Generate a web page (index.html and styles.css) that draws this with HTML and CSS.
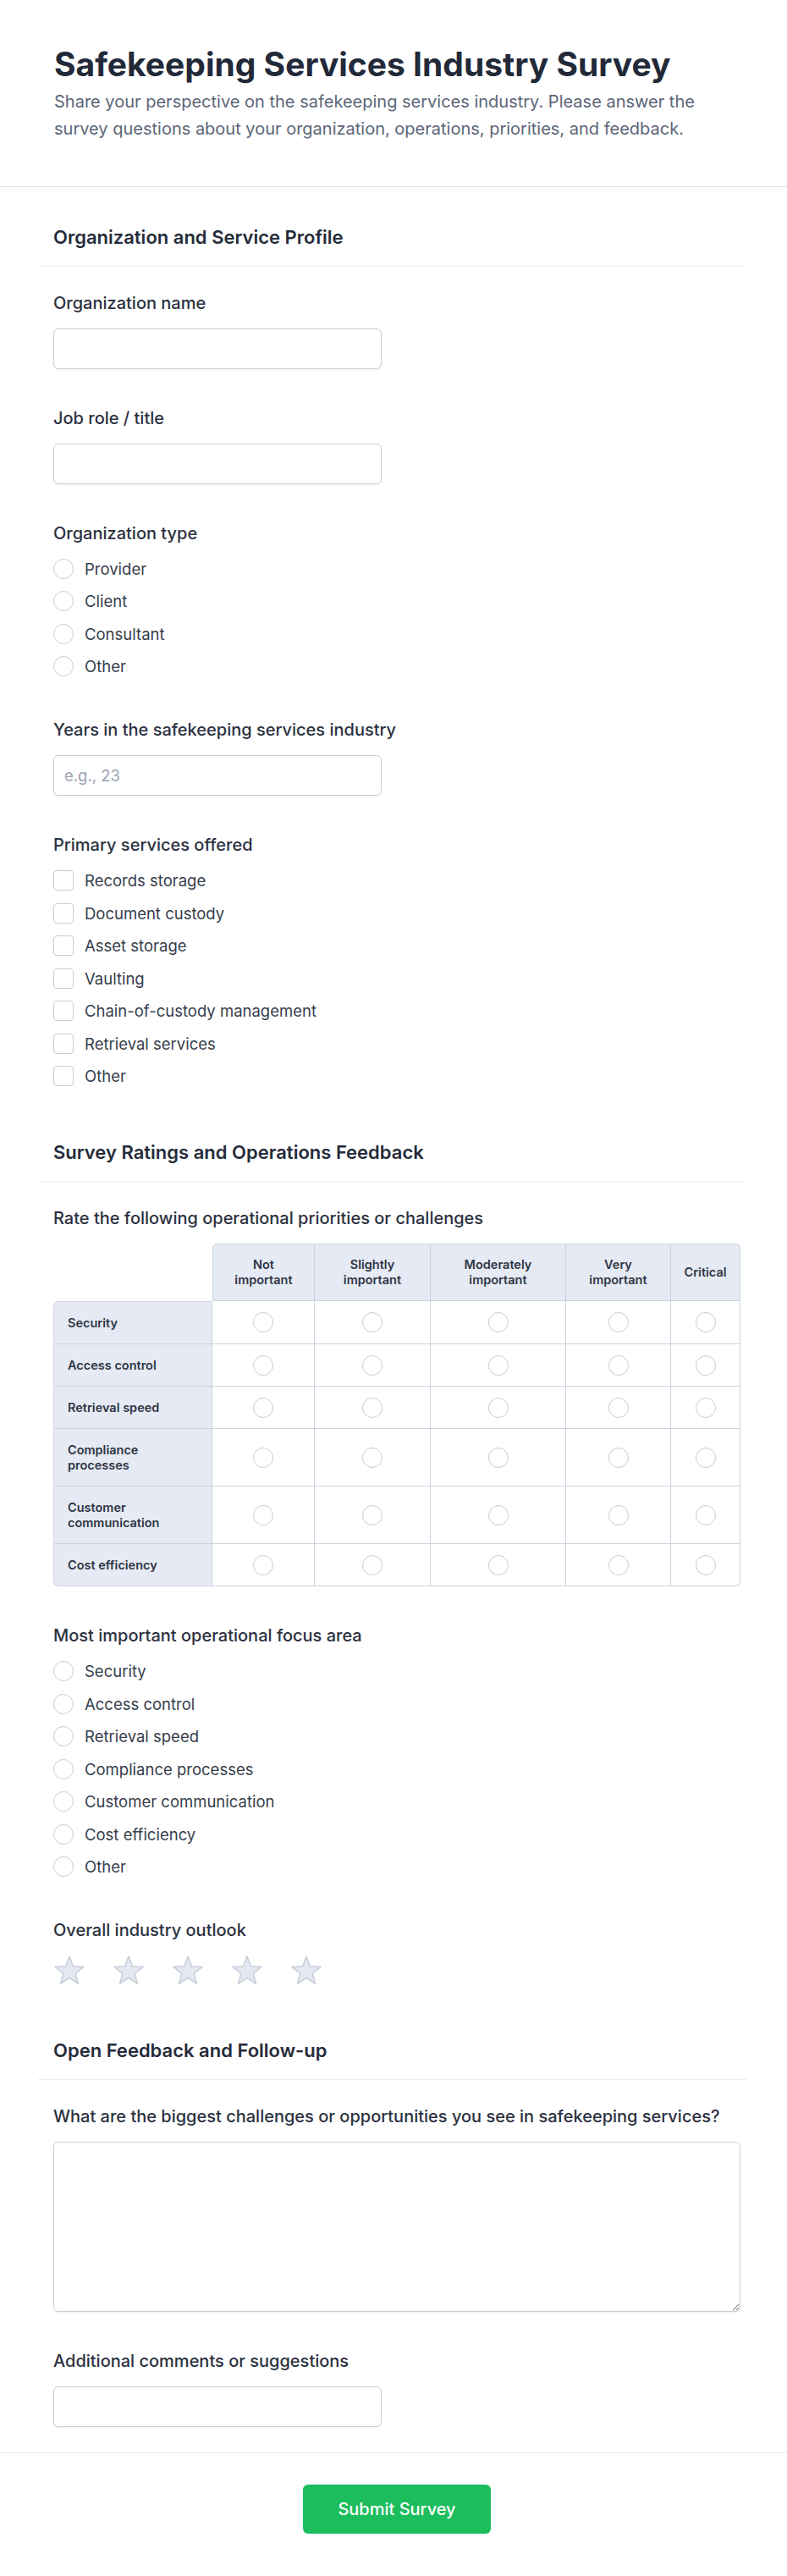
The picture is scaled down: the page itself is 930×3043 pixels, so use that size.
FILE: index.html
```html
<!DOCTYPE html>
<html lang="en">
<head>
<meta charset="utf-8">
<title>Safekeeping Services Industry Survey</title>
<link rel="stylesheet" href="styles.css">
</head>
<body>
<header class="survey-header">
  <h1 class="title">Safekeeping Services Industry Survey</h1>
  <p class="subtitle">Share your perspective on the safekeeping services industry. Please answer the survey questions about your organization, operations, priorities, and feedback.</p>
</header>

<form class="survey-form">
  <section class="section">
    <h2 class="section-title">Organization and Service Profile</h2>
    <div class="section-body">
      <div class="field">
        <label class="field-label">Organization name</label>
        <input class="text-input" type="text">
      </div>
      <div class="field">
        <label class="field-label">Job role / title</label>
        <input class="text-input" type="text">
      </div>
      <div class="field field-choices">
        <span class="field-label">Organization type</span>
        <div class="options">
          <label class="option"><input class="radio" type="radio" name="orgtype"><span>Provider</span></label>
          <label class="option"><input class="radio" type="radio" name="orgtype"><span>Client</span></label>
          <label class="option"><input class="radio" type="radio" name="orgtype"><span>Consultant</span></label>
          <label class="option"><input class="radio" type="radio" name="orgtype"><span>Other</span></label>
        </div>
      </div>
      <div class="field">
        <label class="field-label">Years in the safekeeping services industry</label>
        <input class="text-input" type="text" placeholder="e.g., 23">
      </div>
      <div class="field field-last">
        <span class="field-label">Primary services offered</span>
        <div class="options">
          <label class="option"><input class="checkbox" type="checkbox"><span>Records storage</span></label>
          <label class="option"><input class="checkbox" type="checkbox"><span>Document custody</span></label>
          <label class="option"><input class="checkbox" type="checkbox"><span>Asset storage</span></label>
          <label class="option"><input class="checkbox" type="checkbox"><span>Vaulting</span></label>
          <label class="option"><input class="checkbox" type="checkbox"><span>Chain-of-custody management</span></label>
          <label class="option"><input class="checkbox" type="checkbox"><span>Retrieval services</span></label>
          <label class="option"><input class="checkbox" type="checkbox"><span>Other</span></label>
        </div>
      </div>
    </div>
  </section>

  <section class="section">
    <h2 class="section-title">Survey Ratings and Operations Feedback</h2>
    <div class="section-body">
      <div class="field">
        <span class="field-label">Rate the following operational priorities or challenges</span>
        <table class="matrix">
          <colgroup>
            <col class="col-label"><col class="col-not"><col class="col-slight"><col class="col-mod"><col class="col-very"><col class="col-crit">
          </colgroup>
          <thead>
            <tr>
              <th class="corner"></th>
              <th class="head head-first">Not important</th>
              <th class="head">Slightly important</th>
              <th class="head">Moderately important</th>
              <th class="head">Very important</th>
              <th class="head head-last">Critical</th>
            </tr>
          </thead>
          <tbody>
            <tr>
              <th class="row-label row-first">Security</th>
              <td><input class="radio" type="radio" name="m1"></td><td><input class="radio" type="radio" name="m1"></td><td><input class="radio" type="radio" name="m1"></td><td><input class="radio" type="radio" name="m1"></td><td><input class="radio" type="radio" name="m1"></td>
            </tr>
            <tr>
              <th class="row-label">Access control</th>
              <td><input class="radio" type="radio" name="m2"></td><td><input class="radio" type="radio" name="m2"></td><td><input class="radio" type="radio" name="m2"></td><td><input class="radio" type="radio" name="m2"></td><td><input class="radio" type="radio" name="m2"></td>
            </tr>
            <tr>
              <th class="row-label">Retrieval speed</th>
              <td><input class="radio" type="radio" name="m3"></td><td><input class="radio" type="radio" name="m3"></td><td><input class="radio" type="radio" name="m3"></td><td><input class="radio" type="radio" name="m3"></td><td><input class="radio" type="radio" name="m3"></td>
            </tr>
            <tr>
              <th class="row-label">Compliance processes</th>
              <td><input class="radio" type="radio" name="m4"></td><td><input class="radio" type="radio" name="m4"></td><td><input class="radio" type="radio" name="m4"></td><td><input class="radio" type="radio" name="m4"></td><td><input class="radio" type="radio" name="m4"></td>
            </tr>
            <tr>
              <th class="row-label">Customer communication</th>
              <td><input class="radio" type="radio" name="m5"></td><td><input class="radio" type="radio" name="m5"></td><td><input class="radio" type="radio" name="m5"></td><td><input class="radio" type="radio" name="m5"></td><td><input class="radio" type="radio" name="m5"></td>
            </tr>
            <tr class="row-last">
              <th class="row-label">Cost efficiency</th>
              <td><input class="radio" type="radio" name="m6"></td><td><input class="radio" type="radio" name="m6"></td><td><input class="radio" type="radio" name="m6"></td><td><input class="radio" type="radio" name="m6"></td><td><input class="radio" type="radio" name="m6"></td>
            </tr>
          </tbody>
        </table>
      </div>
      <div class="field field-choices">
        <span class="field-label">Most important operational focus area</span>
        <div class="options">
          <label class="option"><input class="radio" type="radio" name="focus"><span>Security</span></label>
          <label class="option"><input class="radio" type="radio" name="focus"><span>Access control</span></label>
          <label class="option"><input class="radio" type="radio" name="focus"><span>Retrieval speed</span></label>
          <label class="option"><input class="radio" type="radio" name="focus"><span>Compliance processes</span></label>
          <label class="option"><input class="radio" type="radio" name="focus"><span>Customer communication</span></label>
          <label class="option"><input class="radio" type="radio" name="focus"><span>Cost efficiency</span></label>
          <label class="option"><input class="radio" type="radio" name="focus"><span>Other</span></label>
        </div>
      </div>
      <div class="field field-last">
        <span class="field-label">Overall industry outlook</span>
        <div class="stars">
          <svg class="star" viewBox="0 0 40 36" width="40" height="34"><polygon points="20,1 24.7,13.53 38.07,14.13 27.61,22.47 31.17,35.37 20,28 8.83,35.37 12.39,22.47 1.93,14.13 15.3,13.53"/></svg>
          <svg class="star" viewBox="0 0 40 36" width="40" height="34"><polygon points="20,1 24.7,13.53 38.07,14.13 27.61,22.47 31.17,35.37 20,28 8.83,35.37 12.39,22.47 1.93,14.13 15.3,13.53"/></svg>
          <svg class="star" viewBox="0 0 40 36" width="40" height="34"><polygon points="20,1 24.7,13.53 38.07,14.13 27.61,22.47 31.17,35.37 20,28 8.83,35.37 12.39,22.47 1.93,14.13 15.3,13.53"/></svg>
          <svg class="star" viewBox="0 0 40 36" width="40" height="34"><polygon points="20,1 24.7,13.53 38.07,14.13 27.61,22.47 31.17,35.37 20,28 8.83,35.37 12.39,22.47 1.93,14.13 15.3,13.53"/></svg>
          <svg class="star" viewBox="0 0 40 36" width="40" height="34"><polygon points="20,1 24.7,13.53 38.07,14.13 27.61,22.47 31.17,35.37 20,28 8.83,35.37 12.39,22.47 1.93,14.13 15.3,13.53"/></svg>
        </div>
      </div>
    </div>
  </section>

  <section class="section">
    <h2 class="section-title">Open Feedback and Follow-up</h2>
    <div class="section-body">
      <div class="field">
        <label class="field-label">What are the biggest challenges or opportunities you see in safekeeping services?</label>
        <textarea class="text-area"></textarea>
      </div>
      <div class="field field-last">
        <label class="field-label">Additional comments or suggestions</label>
        <input class="text-input" type="text">
      </div>
    </div>
  </section>
</form>

<footer class="form-footer">
  <button class="submit-btn" type="button">Submit Survey</button>
</footer>
</body>
</html>
```

FILE: styles.css
```css
* { box-sizing: border-box; }

html, body {
  margin: 0;
  padding: 0;
  background: #ffffff;
}

body {
  font-family: Inter, "Noto Sans", "Liberation Sans", sans-serif;
  color: #2b3140;
  font-size: 18.5px;
}

.survey-header {
  padding: 53px 64px 52px;
  border-bottom: 1px solid #dde2ea;
}

.title {
  margin: 0 0 4px;
  font-size: 39px;
  line-height: 46.8px;
  font-weight: 700;
  color: #222939;
}

.subtitle {
  margin: 0;
  font-size: 20px;
  line-height: 32px;
  color: #5b6577;
}

.survey-form {
  padding: 45px 47px 30px 45px;
}

.section + .section {
  margin-top: 64px;
}

.section-title {
  margin: 0;
  padding: 0 18px 20px;
  font-size: 22px;
  line-height: 28px;
  font-weight: 600;
  color: #252b3a;
  border-bottom: 1px solid #eceef2;
}

.section-body {
  padding: 31px 8px 0 18px;
}

.field {
  display: flex;
  flex-direction: column;
  align-items: flex-start;
  margin-bottom: 46px;
}

.field-choices {
  margin-bottom: 51px;
}

.field-last {
  margin-bottom: 0;
}

.field-label {
  display: block;
  font-size: 20px;
  line-height: 24px;
  font-weight: 500;
  color: #2b3140;
  margin-bottom: 18px;
}

.text-input {
  width: 388px;
  height: 48px;
  padding: 0 12px;
  border: 1px solid #c9ced9;
  border-radius: 6px;
  background: #fff;
  font-family: inherit;
  font-size: 18.5px;
  color: #2b3140;
  box-shadow: 0 1px 2px rgba(30, 40, 60, 0.08);
}

.text-input::placeholder {
  color: #9aa2b1;
}

.text-area {
  width: 100%;
  height: 201px;
  padding: 12px;
  border: 1px solid #c9ced9;
  border-radius: 6px;
  font-family: inherit;
  font-size: 18.5px;
  box-shadow: 0 1px 2px rgba(30, 40, 60, 0.08);
}

.options {
  display: flex;
  flex-direction: column;
  gap: 14.5px;
}

.option {
  display: flex;
  align-items: center;
  gap: 13px;
  height: 24px;
  font-size: 18.5px;
  line-height: 24px;
  color: #363d4c;
}

.radio,
.checkbox {
  appearance: none;
  -webkit-appearance: none;
  margin: 0;
  width: 24px;
  height: 24px;
  flex: none;
  border: 1.5px solid #c6ccd8;
  background: #fff;
}

.radio {
  border-radius: 50%;
}

.checkbox {
  border-radius: 4px;
}

/* matrix */
.matrix {
  width: 100%;
  table-layout: fixed;
  border-collapse: separate;
  border-spacing: 0;
  font-size: 14.5px;
  line-height: 18px;
  color: #2f3544;
}

.col-label { width: 188px; }
.col-not { width: 121px; }
.col-slight { width: 137px; }
.col-mod { width: 160px; }
.col-very { width: 124px; }
.col-crit { width: 82px; }

.matrix th {
  font-weight: 600;
}

.corner {
  background: transparent;
  border: none;
}

.head {
  background: #e5eaf4;
  padding: 15px 14px;
  text-align: center;
  border-top: 1px solid #ccd3df;
  border-right: 1px solid #ccd3df;
  border-bottom: 1px solid #ccd3df;
}

.head-first {
  border-left: 1px solid #ccd3df;
  border-top-left-radius: 6px;
}

.head-last {
  border-top-right-radius: 6px;
  padding: 15px 6px;
}

.row-label {
  background: #e5eaf4;
  text-align: left;
  padding: 15.5px 26px 15.5px 16px;
  border-left: 1px solid #ccd3df;
  border-right: 1px solid #ccd3df;
  border-bottom: 1px solid #ccd3df;
}

.row-first {
  border-top: 1px solid #ccd3df;
  border-top-left-radius: 6px;
}

.matrix td {
  padding: 0;
  text-align: center;
  vertical-align: middle;
  border-right: 1px solid #ccd3df;
  border-bottom: 1px solid #ccd3df;
  background: #fff;
}

.matrix td .radio {
  display: block;
  margin: 0 auto;
}

.row-last .row-label {
  border-bottom-left-radius: 6px;
}

.row-last td:last-child {
  border-bottom-right-radius: 6px;
}

/* stars */
.stars {
  display: flex;
  gap: 30px;
  margin-left: -1px;
}

.star {
  display: block;
  overflow: visible;
}

.star polygon {
  fill: #e4e8f1;
  stroke: #c5ccd9;
  stroke-width: 1.5;
  stroke-linejoin: round;
}

/* footer */
.form-footer {
  border-top: 1px solid #e3e7ee;
  padding: 37px 55px 51px 63px;
  display: flex;
  justify-content: center;
}

.submit-btn {
  height: 58px;
  padding: 0 41px;
  border: none;
  border-radius: 6px;
  background: #1cbd5c;
  color: #ffffff;
  font-family: inherit;
  font-size: 20px;
  font-weight: 500;
  cursor: pointer;
}
```
